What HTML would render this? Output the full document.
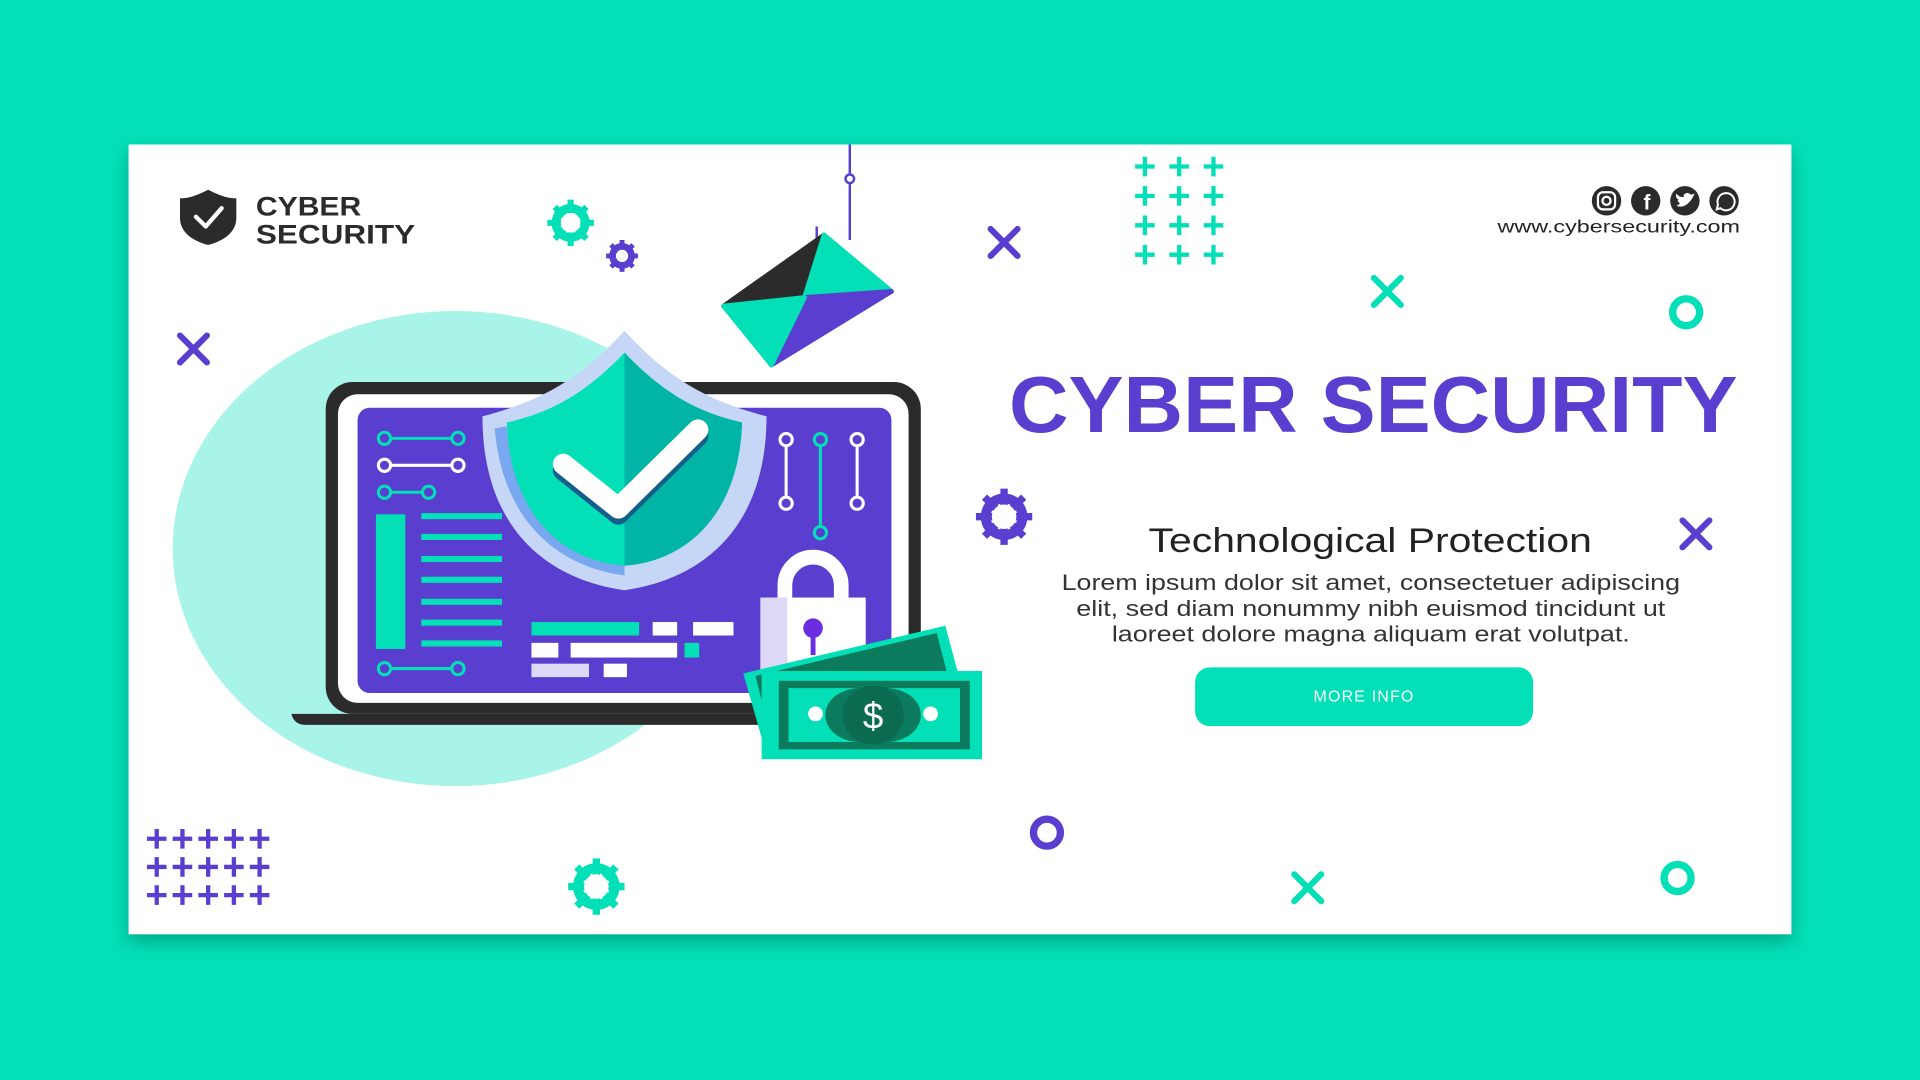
<!DOCTYPE html>
<html><head><meta charset="utf-8"><style>
html,body{margin:0;padding:0;width:1920px;height:1080px;overflow:hidden;background:#03dfb6;}
svg{display:block}
</style></head><body>
<svg width="1920" height="1080" viewBox="0 0 1568 882" xmlns="http://www.w3.org/2000/svg" font-family="Liberation Sans, sans-serif">
<defs>
<filter id="sh" x="-5%" y="-5%" width="110%" height="115%"><feDropShadow dx="0" dy="6" stdDeviation="7" flood-color="#000" flood-opacity="0.25"/></filter>
</defs>
<rect width="1568" height="882" fill="#03dfb6"/>
<rect x="105" y="118" width="1358" height="645" fill="#fff" filter="url(#sh)"/>

<!-- logo -->
<path d="M170,155 C160,160 154,162 147,162 L147,178 C147,190 158,197 170,200 C182,197 193,190 193,178 L193,162 C186,162 180,160 170,155Z" fill="#2b2b2b"/>
<path d="M160,177 L168,185 L181,170" fill="none" stroke="#fff" stroke-width="3.5" stroke-linecap="round" stroke-linejoin="round"/>
<text x="209" y="176" font-size="22" font-weight="bold" fill="#2b2b2b" textLength="86" lengthAdjust="spacingAndGlyphs">CYBER</text>
<text x="209" y="199" font-size="22" font-weight="bold" fill="#2b2b2b" textLength="130" lengthAdjust="spacingAndGlyphs">SECURITY</text>

<!-- big circle -->
<ellipse cx="372" cy="448" rx="231" ry="194" fill="#a8f4e9"/>

<!-- decorations -->
<g stroke="#03dfb6"><g transform="translate(466,182)"><circle r="12" fill="none" stroke-width="7"/><path d="M0,-19V19M-19,0H19M-13,-13L13,13M13,-13L-13,13" stroke-width="5"/><circle r="8" fill="#fff" stroke="none"/></g></g>
<g stroke="#5a3ecf"><g transform="translate(508,209)"><circle r="8" fill="none" stroke-width="5"/><path d="M0,-13V13M-13,0H13M-9,-9L9,9M9,-9L-9,9" stroke-width="4"/><circle r="5" fill="#fff" stroke="none"/></g></g>
<g stroke="#5a3ecf"><g transform="translate(820,422)"><circle r="15" fill="none" stroke-width="8"/><path d="M0,-23V23M-23,0H23M-16,-16L16,16M16,-16L-16,16" stroke-width="6"/><circle r="10" fill="#fff" stroke="none"/></g></g>
<g stroke="#03dfb6"><g transform="translate(487,724)"><circle r="15" fill="none" stroke-width="8"/><path d="M0,-23V23M-23,0H23M-16,-16L16,16M16,-16L-16,16" stroke-width="6"/><circle r="10" fill="#fff" stroke="none"/></g></g>

<g fill="none" stroke-linecap="round" stroke-width="5">
<path d="M809,187 L831,209 M831,187 L809,209" stroke="#5a3ecf"/>
<path d="M147,274 L169,296 M169,274 L147,296" stroke="#5a3ecf"/>
<path d="M1374,425 L1396,447 M1396,425 L1374,447" stroke="#5a3ecf"/>
<path d="M1122,227 L1144,249 M1144,227 L1122,249" stroke="#03dfb6"/>
<path d="M1057,714 L1079,736 M1079,714 L1057,736" stroke="#03dfb6"/>
<circle cx="1377" cy="255" r="11" stroke="#03dfb6" stroke-width="6"/>
<circle cx="1370" cy="717" r="11" stroke="#03dfb6" stroke-width="6"/>
<circle cx="855" cy="680" r="11" stroke="#5a3ecf" stroke-width="6"/>
</g>
<g stroke="#03dfb6" stroke-width="3.5">
<path d="M935,128v16M927,136h16 M963,128v16M955,136h16 M991,128v16M983,136h16
M935,152v16M927,160h16 M963,152v16M955,160h16 M991,152v16M983,160h16
M935,176v16M927,184h16 M963,176v16M955,184h16 M991,176v16M983,184h16
M935,200v16M927,208h16 M963,200v16M955,208h16 M991,200v16M983,208h16"/>
</g>
<g stroke="#5a3ecf" stroke-width="3.5">
<path d="M128,677v16M120,685h16 M149,677v16M141,685h16 M170,677v16M162,685h16 M191,677v16M183,685h16 M212,677v16M204,685h16
M128,700v16M120,708h16 M149,700v16M141,708h16 M170,700v16M162,708h16 M191,700v16M183,708h16 M212,700v16M204,708h16
M128,723v16M120,731h16 M149,723v16M141,731h16 M170,723v16M162,731h16 M191,723v16M183,731h16 M212,723v16M204,731h16"/>
</g>

<!-- hook + envelope -->
<path d="M694,118V196" stroke="#5a3ecf" stroke-width="2"/>
<circle cx="694" cy="146" r="3.5" fill="#fff" stroke="#5a3ecf" stroke-width="2"/>
<path d="M667,185 V205 Q667,209 671,207" fill="none" stroke="#5a3ecf" stroke-width="2"/>
<g stroke-linejoin="round" stroke-width="4">
<polygon points="591,250 673,192 657,243" fill="#2b2b2b" stroke="#2b2b2b"/>
<polygon points="673,192 728,238 657,243" fill="#03dfb6" stroke="#03dfb6"/>
<polygon points="728,238 630,298 657,243" fill="#5a3ecf" stroke="#5a3ecf"/>
<polygon points="591,250 630,298 657,243" fill="#03dfb6" stroke="#03dfb6"/>
</g>

<!-- laptop -->
<path d="M238,583 H620 V592 H250 Q240,592 238,583Z" fill="#2b2b2b"/>
<rect x="266" y="312" width="486" height="271" rx="22" fill="#2b2b2b"/>
<rect x="276" y="322" width="466" height="252" rx="16" fill="#fff"/>
<rect x="292" y="333" width="436" height="233" rx="10" fill="#5a3ecf"/>
<g fill="none" stroke-width="2.5">
<path d="M319,358H369" stroke="#03dfb6"/><circle cx="314" cy="358" r="5" stroke="#03dfb6"/><circle cx="374" cy="358" r="5" stroke="#03dfb6"/>
<path d="M319,380H369" stroke="#fff"/><circle cx="314" cy="380" r="5" stroke="#fff"/><circle cx="374" cy="380" r="5" stroke="#fff"/>
<path d="M319,402H345" stroke="#03dfb6"/><circle cx="314" cy="402" r="5" stroke="#03dfb6"/><circle cx="350" cy="402" r="5" stroke="#03dfb6"/>
<path d="M319,546H369" stroke="#03dfb6"/><circle cx="314" cy="546" r="5" stroke="#03dfb6"/><circle cx="374" cy="546" r="5" stroke="#03dfb6"/>
<path d="M642,364V406" stroke="#fff"/><circle cx="642" cy="359" r="5" stroke="#fff"/><circle cx="642" cy="411" r="5" stroke="#fff"/>
<path d="M670,364V430" stroke="#03dfb6"/><circle cx="670" cy="359" r="5" stroke="#03dfb6"/><circle cx="670" cy="435" r="5" stroke="#03dfb6"/>
<path d="M700,364V406" stroke="#fff"/><circle cx="700" cy="359" r="5" stroke="#fff"/><circle cx="700" cy="411" r="5" stroke="#fff"/>
</g>
<rect x="307" y="420" width="24" height="110" fill="#03dfb6"/>
<g fill="#03dfb6"><rect x="344" y="419" width="66" height="5"/><rect x="344" y="436" width="66" height="5"/><rect x="344" y="454" width="66" height="5"/><rect x="344" y="471" width="66" height="5"/><rect x="344" y="489" width="66" height="5"/><rect x="344" y="506" width="66" height="5"/><rect x="344" y="523" width="66" height="5"/></g>
<rect x="434" y="508" width="88" height="11" fill="#03dfb6"/>
<rect x="533" y="508" width="20" height="11" fill="#fff"/>
<rect x="566" y="508" width="33" height="11" fill="#fff"/>
<rect x="434" y="525" width="22" height="12" fill="#fff"/>
<rect x="466" y="525" width="87" height="12" fill="#fff"/>
<rect x="559" y="525" width="12" height="12" fill="#03dfb6"/>
<rect x="434" y="542" width="47" height="11" fill="#dcd8f5"/>
<rect x="493" y="542" width="19" height="11" fill="#fff"/>
<!-- lock -->
<path d="M641,491 V478 A23,23 0 0 1 687,478 V491" fill="none" stroke="#fff" stroke-width="12"/>
<rect x="621" y="488" width="86" height="74" fill="#fff"/>
<rect x="621" y="488" width="22" height="74" fill="#dcd8f5"/>
<circle cx="664" cy="513" r="8" fill="#6a2ee0"/><rect x="662" y="513" width="4" height="22" fill="#6a2ee0"/>
<!-- shield -->
<path d="M510,270 C470,315 432,330 394,340 C394,425 440,472 510,482 C580,472 626,425 626,340 C588,330 550,315 510,270Z" fill="#c6d6f6"/>
<path d="M510,470 C450,462 410,420 404,350 L414,348 C418,415 455,456 510,462Z" fill="#7aa8f0"/>
<path d="M510,288 C475,325 445,338 414,345 C416,415 455,458 510,462 C565,458 604,415 606,345 C575,338 545,325 510,288Z" fill="#03dfb6"/>
<path d="M510,288 C545,325 575,338 606,345 C604,415 565,458 510,462Z" fill="#00b5a6"/>
<path d="M460,384 L505,420 L570,356" fill="none" stroke="#135f8a" stroke-width="17" stroke-linecap="round" stroke-linejoin="round"/>
<path d="M460,379 L505,415 L570,351" fill="none" stroke="#fff" stroke-width="17" stroke-linecap="round" stroke-linejoin="round"/>
<!-- money -->
<polygon points="607,550 772,511 790,578 627,620" fill="#03dfb6"/>
<polygon points="617,552 765,517 780,575 632,612" fill="#0b7a5d"/>
<rect x="622" y="548" width="180" height="72" fill="#03dfb6"/>
<rect x="636" y="556" width="156" height="56" fill="#0b7a5d"/>
<path d="M644,562 H702 A28,22 0 0 0 702,606 H644Z M784,562 H724 A28,22 0 0 1 724,606 H784Z" fill="#03dfb6"/>
<ellipse cx="713" cy="584" rx="25" ry="24" fill="#0b6b50"/>
<text x="713" y="595" font-size="30" fill="#fff" text-anchor="middle">$</text>
<circle cx="666" cy="583" r="6" fill="#fff"/><circle cx="760" cy="583" r="6" fill="#fff"/>

<!-- social -->
<g fill="#2b2b2b"><circle cx="1312" cy="164" r="12"/><circle cx="1344" cy="164" r="12"/><circle cx="1376" cy="164" r="12"/><circle cx="1408" cy="164" r="12"/></g>
<rect x="1305" y="157" width="14" height="14" rx="4" fill="none" stroke="#fff" stroke-width="1.8"/><circle cx="1312" cy="164" r="3.3" fill="none" stroke="#fff" stroke-width="1.8"/>
<text x="1345" y="171" font-size="17" font-weight="bold" fill="#fff" text-anchor="middle">f</text>
<path d="M1369,168 Q1376,171 1382,162 L1384,158 L1381,159 Q1378,156 1375,159 L1375,161 Q1371,161 1369,158 Q1368,162 1371,163 Q1369,164 1372,166 Q1370,168 1369,168Z" fill="#fff"/>
<path d="M1402,171 L1403,167 A7,7 0 1 1 1405,170Z" fill="none" stroke="#fff" stroke-width="1.6"/>
<text x="1421" y="190" font-size="14" fill="#222" text-anchor="end" textLength="198" lengthAdjust="spacingAndGlyphs">www.cybersecurity.com</text>

<!-- text -->
<text x="824" y="353" font-size="65" font-weight="bold" fill="#5a3ecf" textLength="595" lengthAdjust="spacingAndGlyphs">CYBER SECURITY</text>
<text x="938" y="451" font-size="28" fill="#222" textLength="362" lengthAdjust="spacingAndGlyphs">Technological Protection</text>
<g font-size="18" fill="#333">
<text x="867" y="482" textLength="505" lengthAdjust="spacingAndGlyphs">Lorem ipsum dolor sit amet, consectetuer adipiscing</text>
<text x="879" y="503" textLength="481" lengthAdjust="spacingAndGlyphs">elit, sed diam nonummy nibh euismod tincidunt ut</text>
<text x="908" y="524" textLength="423" lengthAdjust="spacingAndGlyphs">laoreet dolore magna aliquam erat volutpat.</text>
</g>
<rect x="976" y="545" width="276" height="48" rx="12" fill="#03dfb6"/>
<text x="1114" y="573" font-size="13" fill="#fff" text-anchor="middle" letter-spacing="1">MORE INFO</text>
</svg>
</body></html>
